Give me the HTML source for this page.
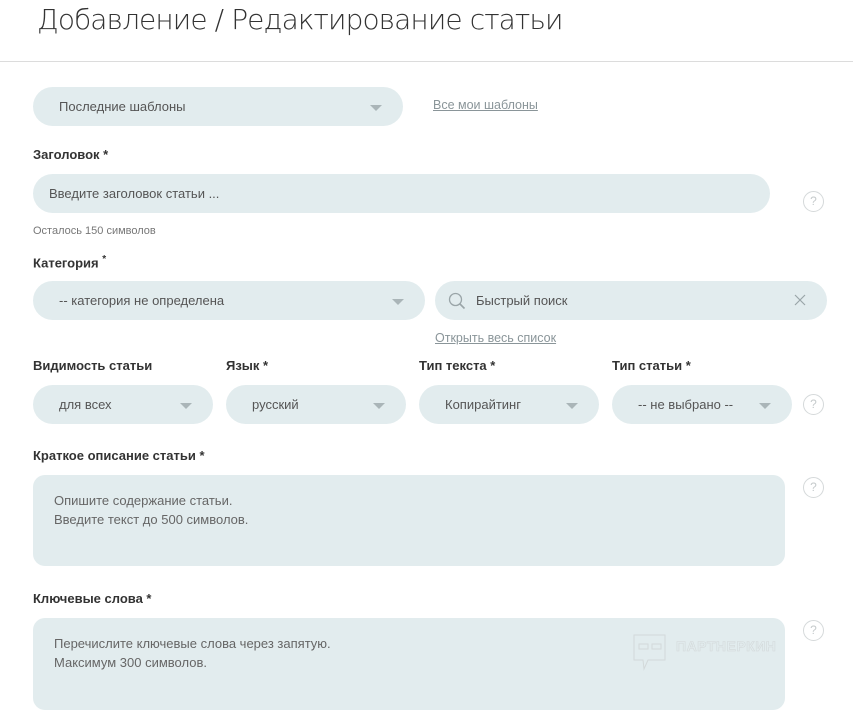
<!DOCTYPE html>
<html><head><meta charset="utf-8"><style>
*{margin:0;padding:0;box-sizing:border-box}
body{width:853px;height:722px;background:#fff;position:relative;overflow:hidden;font-family:"Liberation Sans","DejaVu Sans",sans-serif;color:#555}
.a{position:absolute;white-space:nowrap}
h1{position:absolute;left:37px;top:3px;color:#333;font-family:"DejaVu Sans","Liberation Sans",sans-serif;font-weight:200;font-size:28px;letter-spacing:-0.9px;white-space:nowrap}
.hr{position:absolute;left:0;top:61px;width:853px;height:1px;background:#dcdcdc}
.f{position:absolute;background:#e2ecee;border-radius:20px;height:39px;font-size:13px;color:#555;line-height:39px}
.f span{position:absolute;left:26px}
.arr{position:absolute;top:18px;width:0;height:0;border-left:6px solid transparent;border-right:6px solid transparent;border-top:6px solid #aab5b8}
.lbl{position:absolute;font-size:13px;font-weight:bold;color:#333;white-space:nowrap}
.lnk{position:absolute;font-size:12.5px;color:#8a9599;text-decoration:underline;white-space:nowrap}
.q{position:absolute;width:21px;height:21px;border:1px solid #d5d9da;border-radius:50%;color:#c6cbcc;font-size:12px;text-align:center;line-height:19px}
.ta{position:absolute;background:#e2ecee;border-radius:12px;font-size:13px;color:#666;line-height:19px;padding:16px 21px}
</style></head><body>
<h1>Добавление / Редактирование статьи</h1>
<div class="hr"></div>

<div class="f" style="left:33px;top:87px;width:370px"><span>Последние шаблоны</span><div class="arr" style="left:337px"></div></div>
<div class="lnk" style="left:433px;top:98px">Все мои шаблоны</div>

<div class="lbl" style="left:33px;top:147px">Заголовок *</div>
<div class="f" style="left:33px;top:174px;width:737px"><span style="left:16px">Введите заголовок статьи ...</span></div>
<div class="q" style="left:803px;top:191px">?</div>
<div class="a" style="left:33px;top:225px;font-size:11px;color:#777">Осталось 150 символов</div>

<div class="lbl" style="left:33px;top:254px">Категория <sup style="font-size:10px">*</sup></div>
<div class="f" style="left:33px;top:281px;width:392px"><span>-- категория не определена</span><div class="arr" style="left:359px"></div></div>
<div class="f" style="left:435px;top:281px;width:392px">
<svg class="a" style="left:13px;top:11px" width="18" height="18" viewBox="0 0 18 18"><circle cx="7.5" cy="7.5" r="6" fill="none" stroke="#9aa5a8" stroke-width="1.3"/><line x1="12" y1="12" x2="16.5" y2="16.5" stroke="#9aa5a8" stroke-width="1.6"/></svg>
<span style="left:41px">Быстрый поиск</span>
<svg class="a" style="left:359px;top:13px" width="12" height="12" viewBox="0 0 12 12"><path d="M1 1L11 11M11 1L1 11" stroke="#9aa5a8" stroke-width="1.2"/></svg>
</div>
<div class="lnk" style="left:435px;top:331px">Открыть весь список</div>

<div class="lbl" style="left:33px;top:358px">Видимость статьи</div>
<div class="lbl" style="left:226px;top:358px">Язык *</div>
<div class="lbl" style="left:419px;top:358px">Тип текста *</div>
<div class="lbl" style="left:612px;top:358px">Тип статьи *</div>
<div class="f" style="left:33px;top:385px;width:180px"><span>для всех</span><div class="arr" style="left:147px"></div></div>
<div class="f" style="left:226px;top:385px;width:180px"><span>русский</span><div class="arr" style="left:147px"></div></div>
<div class="f" style="left:419px;top:385px;width:180px"><span>Копирайтинг</span><div class="arr" style="left:147px"></div></div>
<div class="f" style="left:612px;top:385px;width:180px"><span>-- не выбрано --</span><div class="arr" style="left:147px"></div></div>
<div class="q" style="left:803px;top:394px">?</div>

<div class="lbl" style="left:33px;top:448px">Краткое описание статьи *</div>
<div class="ta" style="left:33px;top:475px;width:752px;height:91px">Опишите содержание статьи.<br>Введите текст до 500 символов.</div>
<div class="q" style="left:803px;top:477px">?</div>

<div class="lbl" style="left:33px;top:591px">Ключевые слова *</div>
<div class="ta" style="left:33px;top:618px;width:752px;height:92px">Перечислите ключевые слова через запятую.<br>Максимум 300 символов.</div>
<div class="q" style="left:803px;top:620px">?</div>

<svg class="a" style="left:633px;top:634px" width="35" height="37" viewBox="0 0 35 37"><path d="M1 1H32V26H15L11 35L10 26H1Z" fill="none" stroke="#d3d9da" stroke-width="1"/><rect x="6" y="10" width="9" height="5" fill="none" stroke="#d3d9da"/><rect x="19" y="10" width="9" height="5" fill="none" stroke="#d3d9da"/></svg>
<div class="a" style="left:676px;top:638px;font-size:14px;font-weight:bold;color:transparent;-webkit-text-stroke:0.6px #d3d9da;letter-spacing:0.5px">ПАРТНЕРКИН</div>
</body></html>
